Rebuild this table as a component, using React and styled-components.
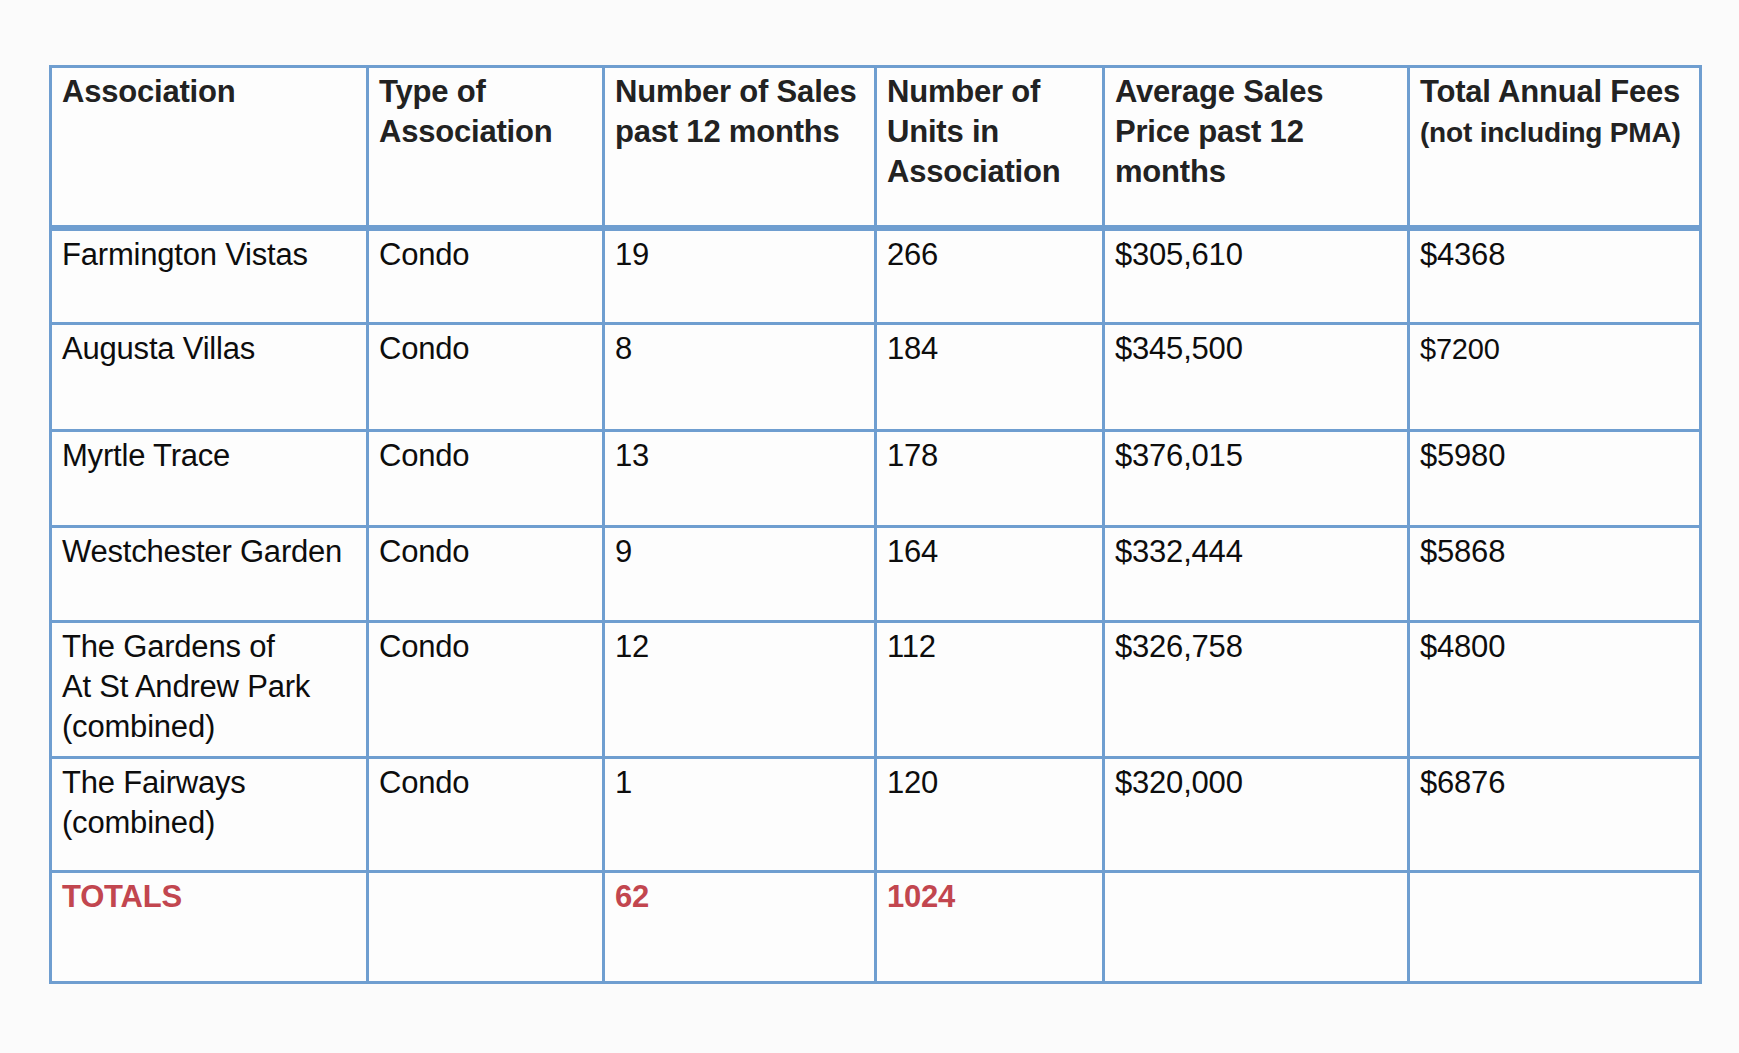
import React from "react";
import styled, { createGlobalStyle } from "styled-components";

const headers = [
  "Association",
  "Type of Association",
  "Number of Sales past 12 months",
  "Number of Units in Association",
  "Average Sales Price past 12 months",
  ["Total Annual Fees", "(not including PMA)"],
];

const widths = [317, 236, 272, 228, 305, 292];

const rows = [
  { h: 96, cells: ["Farmington Vistas", "Condo", "19", "266", "$305,610", "$4368"] },
  { h: 107, cells: ["Augusta Villas", "Condo", "8", "184", "$345,500", "$7200"], smallLast: true },
  { h: 96, cells: ["Myrtle Trace", "Condo", "13", "178", "$376,015", "$5980"] },
  { h: 95, cells: ["Westchester Garden", "Condo", "9", "164", "$332,444", "$5868"] },
  {
    h: 136,
    cells: [
      ["The Gardens of", "At St Andrew Park", "(combined)"],
      "Condo",
      "12",
      "112",
      "$326,758",
      "$4800",
    ],
  },
  {
    h: 114,
    cells: [["The Fairways", "(combined)"], "Condo", "1", "120", "$320,000", "$6876"],
  },
];

const totals = ["TOTALS", "", "62", "1024", "", ""];

const GlobalStyle = createGlobalStyle`
  html, body {
    margin: 0;
    padding: 0;
    background: #fbfbfb;
  }
`;

const Page = styled.div`
  padding: 65px 0 0 49px;
  min-height: 1053px;
  box-sizing: border-box;
`;

const Table = styled.table`
  border-collapse: collapse;
  table-layout: fixed;
  width: 1650px;
  font-family: "Liberation Sans", Arial, sans-serif;
  font-size: 31px;
  line-height: 40px;
  border: 3px solid #6f9ed0;
  background: #fdfdfd;
`;

const HeadRow = styled.tr`
  height: 161px;
  border-bottom: 6px solid #6f9ed0;
`;

const Row = styled.tr`
  height: ${(p) => p.h}px;
`;

const Th = styled.th`
  border: 3px solid #6f9ed0;
  border-bottom: 6px solid #6f9ed0;
  padding: 4px 10px 0 10px;
  text-align: left;
  vertical-align: top;
  font-weight: bold;
  color: #222;
  letter-spacing: -0.2px;
`;

const SubNote = styled.div`
  font-size: 28px;
  line-height: 38px;
  margin-top: 2px;
  white-space: nowrap;
`;

const Td = styled.td`
  border: 3px solid #6f9ed0;
  padding: 4px 10px 0 10px;
  vertical-align: top;
  color: ${(p) => (p.total ? "#c2464f" : "#0d0d0d")};
  font-weight: ${(p) => (p.total ? "bold" : "normal")};
  font-size: ${(p) => (p.small ? "29px" : "31px")};
  letter-spacing: -0.2px;
`;

const Line = styled.div`
  white-space: nowrap;
`;

function CellText({ value }) {
  if (Array.isArray(value)) {
    return value.map((l, i) => <Line key={i}>{l}</Line>);
  }
  return value;
}

function HeadText({ value }) {
  if (Array.isArray(value)) {
    return (
      <>
        <Line>{value[0]}</Line>
        <SubNote>{value[1]}</SubNote>
      </>
    );
  }
  return value;
}

export default function App() {
  return (
    <Page>
      <GlobalStyle />
      <Table>
        <colgroup>
          {widths.map((w, i) => (
            <col key={i} style={{ width: w }} />
          ))}
        </colgroup>
        <thead>
          <HeadRow>
            {headers.map((h, i) => (
              <Th key={i}>
                <HeadText value={h} />
              </Th>
            ))}
          </HeadRow>
        </thead>
        <tbody>
          {rows.map((r, i) => (
            <Row key={i} h={r.h}>
              {r.cells.map((c, j) => (
                <Td key={j} small={r.smallLast && j === 5}>
                  <CellText value={c} />
                </Td>
              ))}
            </Row>
          ))}
          <Row h={111}>
            {totals.map((c, j) => (
              <Td key={j} total>
                {c}
              </Td>
            ))}
          </Row>
        </tbody>
      </Table>
    </Page>
  );
}
